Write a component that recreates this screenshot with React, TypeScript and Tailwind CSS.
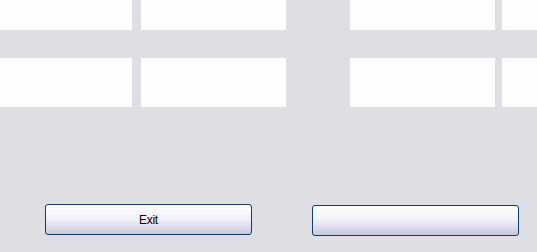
const cells = ["w-[132px]", "ml-[9px] w-[145px]", "ml-[64px] w-[145px]", "ml-[7px] flex-1"];

const Row = ({ height }: { height: string }) => (
  <div className={`flex ${height}`}>
    {cells.map((c, i) => (
      <div key={i} className={`${c} bg-[#fefeff]`} />
    ))}
  </div>
);

const XpButton = ({ label, className = "" }: { label?: string; className?: string }) => (
  <button
    className={`h-[31px] w-[207px] rounded-[3px] border border-[#0a3d73] bg-gradient-to-b from-[#ffffff] via-[#efeff8] to-[#c8c8dc] text-[12px] tracking-[-0.3px] text-black ${className}`}
    style={{ fontFamily: '"Liberation Sans", Arial, sans-serif' }}
  >
    {label}
  </button>
);

export default function App() {
  return (
    <div className="flex h-[252px] w-[537px] flex-col overflow-hidden bg-[#dfdee3]">
      <Row height="h-[30px]" />
      <div className="h-[28px]" />
      <Row height="h-[49px]" />
      <div className="mt-[97px] flex items-start pl-[45px]">
        <XpButton label="Exit" />
        <XpButton className="ml-[60px] mt-[1px]" />
      </div>
    </div>
  );
}
